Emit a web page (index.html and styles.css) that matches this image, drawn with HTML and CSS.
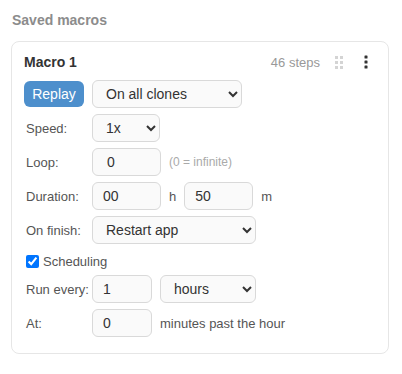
FILE: index.html
```html
<!DOCTYPE html>
<html lang="en">
  <head>
    <meta charset="UTF-8" />
    <meta name="viewport" content="width=device-width, initial-scale=1.0" />
    <title>Saved macros</title>
    <link rel="stylesheet" href="styles.css">
  </head>
  <body>
    <div class="section-title">Saved macros</div>

    <div class="macro-card">
      <div class="macro-head">
        <span class="macro-name">Macro 1</span>
        <span class="macro-steps">46 steps</span>
        <span class="grip" title="Drag">
          <svg width="8" height="14" viewBox="0 0 8 14">
            <g fill="#d4d4d4">
              <rect x="0" y="1" width="3" height="3" />
              <rect x="5" y="1" width="3" height="3" />
              <rect x="0" y="6" width="3" height="3" />
              <rect x="5" y="6" width="3" height="3" />
              <rect x="0" y="11" width="3" height="3" />
              <rect x="5" y="11" width="3" height="3" />
            </g>
          </svg>
        </span>
        <button class="menu-btn" title="More">
          <svg width="4" height="14" viewBox="0 0 4 14">
            <g fill="#333">
              <rect x="0.5" y="0.5" width="3" height="3" rx="0.6" />
              <rect x="0.5" y="5.5" width="3" height="3" rx="0.6" />
              <rect x="0.5" y="10.5" width="3" height="3" rx="0.6" />
            </g>
          </svg>
        </button>
      </div>

      <div class="row">
        <button class="replay-btn">Replay</button>
        <select class="ctl sel-target">
          <option>On all clones</option>
          <option>On this clone</option>
        </select>
      </div>

      <div class="row">
        <label class="lbl">Speed:</label>
        <select class="ctl sel-speed">
          <option>1x</option>
          <option>2x</option>
        </select>
      </div>

      <div class="row">
        <label class="lbl">Loop:</label>
        <input class="ctl num loop" type="text" value="0" />
        <span class="hint">(0 = infinite)</span>
      </div>

      <div class="row">
        <label class="lbl">Duration:</label>
        <input class="ctl num" type="text" value="00" />
        <span class="unit">h</span>
        <input class="ctl num" type="text" value="50" />
        <span class="unit">m</span>
      </div>

      <div class="row">
        <label class="lbl">On finish:</label>
        <select class="ctl sel-finish">
          <option>Restart app</option>
          <option>Stop</option>
        </select>
      </div>

      <label class="check-row">
        <input type="checkbox" checked />
        <span>Scheduling</span>
      </label>

      <div class="row">
        <label class="lbl">Run every:</label>
        <input class="ctl num short" type="text" value="1" />
        <select class="ctl sel-unit">
          <option>hours</option>
          <option>minutes</option>
        </select>
      </div>

      <div class="row">
        <label class="lbl">At:</label>
        <input class="ctl num short" type="text" value="0" />
        <span class="unit">minutes past the hour</span>
      </div>
    </div>
  </body>
</html>
```

FILE: styles.css
```css
body {
  margin: 0;
  padding: 12px 13px 12px 11px;
  background-color: #fff;
  font-family: "Liberation Sans", Arial, sans-serif;
  font-size: 13px;
  color: #555;
}

.section-title {
  font-size: 14px;
  font-weight: bold;
  color: #8c8c8c;
  line-height: 16px;
  padding-left: 1px;
  margin-bottom: 13px;
}

.macro-card {
  border: 1px solid #e6e6e6;
  border-radius: 8px;
  padding: 12px 12px 16px 12px;
}

.macro-head {
  display: flex;
  align-items: center;
  height: 16px;
  margin-bottom: 10px;
}

.macro-name {
  font-size: 14px;
  font-weight: bold;
  color: #333;
  flex: 1;
}

.macro-steps {
  font-size: 13px;
  color: #999;
  margin-right: 15px;
}

.grip {
  display: flex;
  margin-right: 21px;
}

.menu-btn {
  display: flex;
  border: none;
  background: none;
  padding: 0;
  margin-right: 8px;
  cursor: pointer;
}

.row {
  display: flex;
  align-items: center;
  gap: 8px;
  margin-bottom: 6px;
}

.row:last-child {
  margin-bottom: 0;
}

.lbl {
  width: 60px;
  flex: none;
  white-space: nowrap;
  padding-left: 2px;
  box-sizing: border-box;
}

.replay-btn {
  width: 60px;
  height: 26px;
  border: none;
  border-radius: 6px;
  background-color: #4d8fcc;
  color: #fff;
  font-family: inherit;
  font-size: 14px;
  cursor: pointer;
}

.ctl {
  height: 28px;
  box-sizing: border-box;
  border: 1px solid #d9d9d9;
  border-radius: 6px;
  background-color: #fafafa;
  font-family: inherit;
  font-size: 14px;
  color: #333;
}

select.ctl {
  padding: 0 6px 0 9px;
}

.num {
  width: 69px;
  padding: 0 10px;
}

.num.loop {
  padding-left: 14px;
}

.num.short {
  width: 60px;
}

.sel-target {
  width: 150px;
}

.sel-speed {
  width: 68px;
}

.sel-finish {
  width: 164px;
}

.sel-unit {
  width: 96px;
}

.hint {
  font-size: 12px;
  color: #aaa;
}

.unit {
  color: #555;
}

.check-row {
  display: flex;
  align-items: center;
  gap: 4px;
  height: 20px;
  margin: 7px 0 4px 0;
  color: #555;
}

.check-row input {
  margin: 0 0 0 2px;
  width: 13px;
  height: 13px;
}
```
